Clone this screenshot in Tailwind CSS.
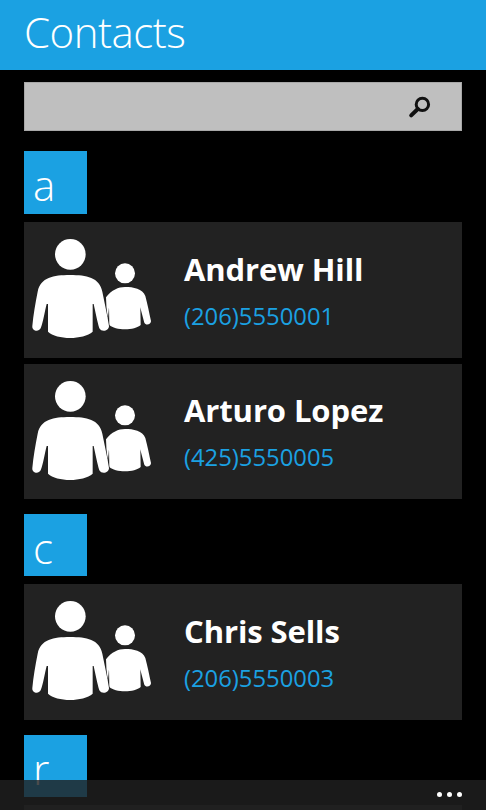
<!DOCTYPE html>
<html>
<head>
<meta charset="utf-8">
<script src="https://cdn.jsdelivr.net/npm/@tailwindcss/browser@4"></script>
</head>
<body class="bg-black">
<div class="relative w-[486px] h-[810px] overflow-hidden bg-black text-white font-['Open_Sans',sans-serif]">
  <header class="h-[69.5px] bg-[#1ba1e2] pl-[24px]">
    <h1 class="text-[42px] leading-[63px] font-light tracking-[-0.5px]">Contacts</h1>
  </header>
  <div class="mx-[24px] mt-[12.5px] h-[49px] bg-[#bfbfbf] border border-[#a8a8a8] flex items-center justify-end pr-[29px]">
    <svg class="w-[24px] h-[24px]" viewBox="0 0 24 24" fill="none" stroke="#111" aria-hidden="true">
      <circle cx="14.4" cy="9.4" r="6.2" stroke-width="3"/>
      <path d="M9.8 14 L3.2 20.4" stroke-width="4" stroke-linecap="round"/>
    </svg>
  </div>
  <main class="mx-[24px] mt-[20px]">
    <div class="w-[63px] h-[63px] bg-[#1ba1e2] pl-[9px] text-[42px] leading-[68px] font-[350]">a</div>
    <div class="mt-[8px] h-[136px] bg-[#222222] flex items-center">
      <svg class="w-[130px] h-[136px] shrink-0" viewBox="12 6 390 408" aria-hidden="true">
        <circle cx="315" cy="160" r="30" fill="#fff"/>
        <path d="M258 232 C275 210 295 201 315 201 C340 201 368 206 376 228 C382 250 388 280 393 303 C394 312 378 318 373 308 C368 290 364 275 361 262 L362 315 C345 332 285 332 268 315 L267 262 C265 280 264 300 262 318 Z" fill="#fff"/>
        <circle cx="151" cy="103" r="46" fill="#fff"/>
        <path d="M150 165 C200 165 238 172 247 215 C254 250 262 285 267 318 C267 333 245 338 238 325 C232 305 226 275 221 252 L218 252 L218 335 C190 360 110 360 84 335 L84 252 L80 252 C74 275 70 305 62 325 C55 338 35 332 37 318 C40 285 46 250 53 215 C62 172 100 165 150 165 Z" fill="#fff" stroke="#222222" stroke-width="3" paint-order="stroke"/>
      </svg>
      <div class="ml-[30px]">
        <div class="text-[31px] leading-[38px] font-bold tracking-[-0.1px]">Andrew Hill</div>
        <div class="mt-[13px] text-[23.8px] leading-[30px] text-[#1ba1e2] font-normal">(206)5550001</div>
      </div>
    </div>
    <div class="mt-[6px] h-[135px] bg-[#222222] flex items-center">
      <svg class="w-[130px] h-[136px] shrink-0" viewBox="12 6 390 408" aria-hidden="true">
        <circle cx="315" cy="160" r="30" fill="#fff"/>
        <path d="M258 232 C275 210 295 201 315 201 C340 201 368 206 376 228 C382 250 388 280 393 303 C394 312 378 318 373 308 C368 290 364 275 361 262 L362 315 C345 332 285 332 268 315 L267 262 C265 280 264 300 262 318 Z" fill="#fff"/>
        <circle cx="151" cy="103" r="46" fill="#fff"/>
        <path d="M150 165 C200 165 238 172 247 215 C254 250 262 285 267 318 C267 333 245 338 238 325 C232 305 226 275 221 252 L218 252 L218 335 C190 360 110 360 84 335 L84 252 L80 252 C74 275 70 305 62 325 C55 338 35 332 37 318 C40 285 46 250 53 215 C62 172 100 165 150 165 Z" fill="#fff" stroke="#222222" stroke-width="3" paint-order="stroke"/>
      </svg>
      <div class="ml-[30px]">
        <div class="text-[31px] leading-[38px] font-bold tracking-[-0.1px]">Arturo Lopez</div>
        <div class="mt-[13px] text-[23.8px] leading-[30px] text-[#1ba1e2] font-normal">(425)5550005</div>
      </div>
    </div>
    <div class="mt-[15px] w-[63px] h-[62px] bg-[#1ba1e2] pl-[9px] text-[42px] leading-[67px] font-[350]">c</div>
    <div class="mt-[8px] h-[136px] bg-[#222222] flex items-center">
      <svg class="w-[130px] h-[136px] shrink-0" viewBox="12 6 390 408" aria-hidden="true">
        <circle cx="315" cy="160" r="30" fill="#fff"/>
        <path d="M258 232 C275 210 295 201 315 201 C340 201 368 206 376 228 C382 250 388 280 393 303 C394 312 378 318 373 308 C368 290 364 275 361 262 L362 315 C345 332 285 332 268 315 L267 262 C265 280 264 300 262 318 Z" fill="#fff"/>
        <circle cx="151" cy="103" r="46" fill="#fff"/>
        <path d="M150 165 C200 165 238 172 247 215 C254 250 262 285 267 318 C267 333 245 338 238 325 C232 305 226 275 221 252 L218 252 L218 335 C190 360 110 360 84 335 L84 252 L80 252 C74 275 70 305 62 325 C55 338 35 332 37 318 C40 285 46 250 53 215 C62 172 100 165 150 165 Z" fill="#fff" stroke="#222222" stroke-width="3" paint-order="stroke"/>
      </svg>
      <div class="ml-[30px]">
        <div class="text-[31px] leading-[38px] font-bold tracking-[-0.1px]">Chris Sells</div>
        <div class="mt-[13px] text-[23.8px] leading-[30px] text-[#1ba1e2] font-normal">(206)5550003</div>
      </div>
    </div>
    <div class="mt-[15px] w-[63px] h-[62px] bg-[#1ba1e2] pl-[9px] text-[42px] leading-[67px] font-[350]">r</div>
    <div class="mt-[8px] h-[136px] bg-[#222222]"></div>
  </main>
  <footer class="absolute left-0 right-0 bottom-0 h-[30px] bg-[#202020]/80 flex justify-end gap-[5px] pt-[11.5px] pr-[24px]">
    <span class="w-[5px] h-[5px] rounded-full bg-white"></span>
    <span class="w-[5px] h-[5px] rounded-full bg-white"></span>
    <span class="w-[5px] h-[5px] rounded-full bg-white"></span>
  </footer>
</div>
</body>
</html>
